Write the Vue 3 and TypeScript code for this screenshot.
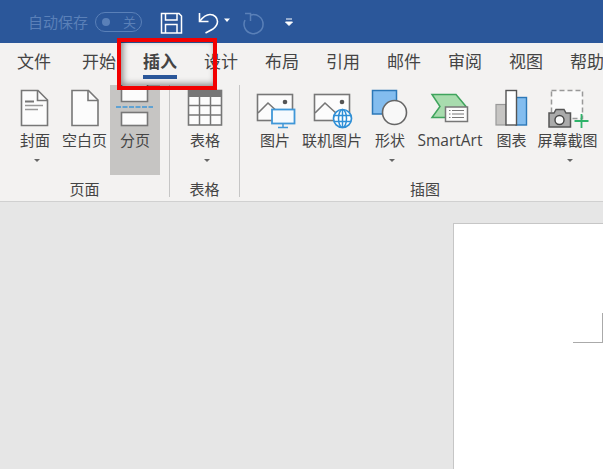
<script setup lang="ts">
const tabs: string[] = ['文件', '开始', '插入', '设计', '布局', '引用', '邮件', '审阅', '视图', '帮助']
</script>

<template>
  <div class="app">
    <header class="titlebar">
      <span class="autosave">自动保存</span>
      <span class="toggle"><i class="toggle-dot"></i><span class="toggle-text">关</span></span>
      <svg class="qat" width="290" height="43" viewBox="150 0 290 43" fill="none">
        <path d="M161.500 13.500h17.500l2.500 2.500v17h-20z" stroke="#fff" stroke-width="1.500" />
        <path d="M165.500 13.500v6.500h11.500v-6.500M165.500 33v-8.500h11.500v8.500" stroke="#fff" stroke-width="1.500" />
        <path d="M199.500 13v8.500h9" stroke="#fff" stroke-width="1.600" />
        <path d="M200 21c3-4 7-6.500 10-6.500 4.500 0 7.500 3.500 7.500 7 0 3.500-2 5.500-4.500 7.500l-7.500 4" stroke="#fff" stroke-width="1.600" />
        <path d="M224 18.500h6l-3 3.500z" fill="#fff" />
        <path d="M251 15a9.500 9.500 0 1 1-6 5M245 13.500h5.500v7.500" stroke="#5a80b8" stroke-width="1.500" />
        <path d="M286 19h6M285.500 22h7l-3.500 3.500z" stroke="#fff" stroke-width="1" fill="#fff" />
      </svg>
    </header>

    <nav class="tabs">
      <span v-for="t in tabs" :key="t" class="tab" :class="{ active: t === '插入' }">{{ t }}</span>
    </nav>

    <section class="ribbon">
      <div class="group g-page">
        <div class="buttons">
          <div class="btn w48">
            <svg class="icon" viewBox="15 88 40 40">
              <path d="M21.500 90.500h16.500l9.500 9.500v25.500h-26z" fill="#fcfcfc" stroke="#777" stroke-width="1.600" />
              <path d="M37.500 90.500v10h10" fill="none" stroke="#777" stroke-width="1.600" />
              <path d="M25 101.500h9" stroke="#777" stroke-width="2" />
              <path d="M25 105.500h18M25 109.500h13" stroke="#999" stroke-width="1.500" />
            </svg>
            <span class="label">封面</span><i class="caret"></i>
          </div>
          <div class="btn w51">
            <svg class="icon" viewBox="64.500 88 40 40">
              <path d="M71.500 90.500h16.500l9.500 9.500v25.500h-26z" fill="#fcfcfc" stroke="#777" stroke-width="1.600" />
              <path d="M87.500 90.500v10h10" fill="none" stroke="#777" stroke-width="1.600" />
            </svg>
            <span class="label">空白页</span>
          </div>
          <div class="btn w50 pressed">
            <svg class="icon" viewBox="115 88 40 40">
              <path d="M121.500 85v16.500h26V85" fill="#fcfcfc" stroke="#777" stroke-width="1.600" />
              <path d="M116 107h37" stroke="#3f97d8" stroke-width="1.300" stroke-dasharray="5 1.500" />
              <rect x="121.500" y="112.500" width="26" height="13" fill="#fcfcfc" stroke="#777" stroke-width="1.600" />
            </svg>
            <span class="label">分页</span>
          </div>
        </div>
        <span class="group-name">页面</span>
      </div>

      <div class="group g-table">
        <div class="buttons">
          <div class="btn w50">
            <svg class="icon" viewBox="185 88 40 40">
              <rect x="188.500" y="90.500" width="33" height="34.500" fill="#fcfcfc" stroke="#777" stroke-width="1.600" />
              <rect x="188" y="90" width="34" height="7" fill="#777" />
              <path d="M199.500 97v28M210.500 97v28M188 105.500h34M188 115h34" stroke="#777" stroke-width="1.500" />
            </svg>
            <span class="label">表格</span><i class="caret"></i>
          </div>
        </div>
        <span class="group-name">表格</span>
      </div>

      <div class="group g-illus">
        <div class="buttons">
          <div class="btn w50">
            <svg class="icon" viewBox="255 88 40 40">
              <rect x="257.500" y="94.500" width="35" height="26" fill="#fcfcfc" stroke="#777" stroke-width="1.600" />
              <path d="M258 113l10-10 12 11" fill="none" stroke="#777" stroke-width="1.600" />
              <circle cx="285" cy="102" r="2.300" fill="#555" />
              <rect x="272" y="109.500" width="22.500" height="14" fill="#f5fafe" stroke="#3f97d8" stroke-width="1.800" />
              <path d="M283 124v3M278 127.500h10" stroke="#3f97d8" stroke-width="1.500" />
            </svg>
            <span class="label">图片</span>
          </div>
          <div class="btn w64">
            <svg class="icon" viewBox="312 88 40 40">
              <rect x="314.500" y="94.500" width="35" height="26" fill="#fcfcfc" stroke="#777" stroke-width="1.600" />
              <path d="M315 113l10-10 12 11" fill="none" stroke="#777" stroke-width="1.600" />
              <circle cx="342" cy="102" r="2.300" fill="#555" />
              <circle cx="342.500" cy="118.500" r="9" fill="#fff" stroke="#2f8fd6" stroke-width="1.700" />
              <ellipse cx="342.500" cy="118.500" rx="4" ry="9" fill="none" stroke="#2f8fd6" stroke-width="1.500" />
              <path d="M342.500 110v17M334 115.500h17M334 121.500h17" stroke="#2f8fd6" stroke-width="1.500" />
            </svg>
            <span class="label">联机图片</span>
          </div>
          <div class="btn w52">
            <svg class="icon" viewBox="370 88 40 40">
              <rect x="372.500" y="90.500" width="24" height="23.500" fill="#83bdef" stroke="#2c78b8" stroke-width="1.500" />
              <circle cx="394.500" cy="112.500" r="12" fill="#f8f8f8" stroke="#666" stroke-width="1.600" />
            </svg>
            <span class="label">形状</span><i class="caret"></i>
          </div>
          <div class="btn w68">
            <svg class="icon" viewBox="430 88 40 40">
              <path d="M432 94.500h24l10 12-10 11h-24l8-11z" fill="#a8dcae" stroke="#3fa45d" stroke-width="1.500" />
              <rect x="445.500" y="107" width="22" height="14.500" fill="#fcfcfc" stroke="#777" stroke-width="1.500" />
              <path d="M449 110.500h1.500M452 110.500h12M449 114h1.500M452 114h12M449 117.500h1.500M452 117.500h12" stroke="#777" stroke-width="1" />
            </svg>
            <span class="label sa">SmartArt</span>
          </div>
          <div class="btn w55">
            <svg class="icon" viewBox="491.500 88 40 40">
              <rect x="495.500" y="104.500" width="10" height="20.500" fill="#c6c5c3" stroke="#999" stroke-width="1.200" />
              <rect x="515.500" y="97.500" width="10.500" height="27.500" fill="#83bdef" stroke="#2c78b8" stroke-width="1.400" />
              <rect x="505.500" y="90.500" width="10.500" height="34.500" fill="#fff" stroke="#555" stroke-width="1.400" />
            </svg>
            <span class="label">图表</span>
          </div>
          <div class="btn w57">
            <svg class="icon" viewBox="547.500 88 40 40">
              <rect x="551" y="90.500" width="31" height="28" fill="#fbfbfb" stroke="#999" stroke-width="1.500" stroke-dasharray="5 3" />
              <path d="M548.500 113h5l2-3.500h8l2 3.500h4.500v14h-21.500z" fill="#aaa" stroke="#555" stroke-width="1.500" />
              <circle cx="559" cy="120" r="4.500" fill="#fbfbfb" stroke="#444" stroke-width="1.400" />
              <path d="M581 114v14M574 121h14" stroke="#2fb36a" stroke-width="1.800" />
            </svg>
            <span class="label">屏幕截图</span><i class="caret"></i>
          </div>
        </div>
        <span class="group-name">插图</span>
      </div>
    </section>

    <main class="canvas">
      <div class="page"><div class="corner"></div></div>
    </main>

    <div class="highlight"></div>
  </div>
</template>

<style>
html, body { margin: 0; overflow: hidden; }
</style>

<style scoped>
.app {
  position: relative;
  width: 603px;
  height: 469px;
  overflow: hidden;
  display: flex;
  flex-direction: column;
  background: #e6e6e6;
  font-family: "Noto Sans CJK SC", "Noto Sans", sans-serif;
  color: #444;
}
.titlebar {
  flex: none;
  height: 43px;
  background: #2b579a;
  display: flex;
  align-items: center;
  padding-left: 28px;
  box-sizing: border-box;
}
.autosave { font-size: 15px; color: #5a80b8; width: 60px; white-space: nowrap; }
.toggle {
  margin-left: 7px;
  width: 47px;
  height: 20px;
  box-sizing: border-box;
  border: 1px solid #5a80b8;
  border-radius: 10px;
  display: flex;
  align-items: center;
  color: #5a80b8;
  padding-left: 6px;
}
.toggle-dot { width: 8px; height: 8px; border-radius: 50%; background: #5a80b8; }
.toggle-text { font-size: 13px; margin-left: 13px; line-height: 1; }
.qat { flex: none; margin-left: 8px; }
.tabs {
  flex: none;
  height: 42px;
  background: #f3f2f1;
  display: flex;
  padding-left: 17px;
  gap: 27px;
  white-space: nowrap;
}
.tab {
  flex: none;
  width: 34px;
  height: 32px;
  font-size: 17px;
  line-height: 35px;
  text-align: center;
}
.tab:first-child { margin-right: 4px; }
.tab.active {
  font-weight: 700;
  border-bottom: 4px solid #2b579a;
}
.ribbon {
  flex: none;
  height: 117px;
  box-sizing: border-box;
  background: #f3f2f1;
  border-bottom: 1px solid #d0d0d0;
  display: flex;
}
.group {
  flex: none;
  box-sizing: border-box;
  height: 112px;
  display: flex;
  flex-direction: column;
  border-right: 1px solid #c6c6c6;
}
.g-page { width: 170px; padding-left: 11px; }
.g-table { width: 70px; padding-left: 10px; }
.g-illus { width: 370px; padding-left: 10px; border-right: none; }
.buttons { flex: none; height: 90px; display: flex; }
.group-name {
  font-size: 15px;
  line-height: 18px;
  margin-top: 5px;
  text-align: center;
  margin-left: -10px;
}
.g-page .group-name { margin-left: -11px; }
.btn {
  flex: none;
  height: 90px;
  display: flex;
  flex-direction: column;
  align-items: center;
}
.w48 { width: 48px; }
.w50 { width: 50px; }
.w51 { width: 51px; }
.w52 { width: 52px; }
.w55 { width: 55px; }
.w57 { width: 57px; }
.w64 { width: 64px; }
.w68 { width: 68px; }
.pressed { background: #c6c5c3; }
.icon { flex: none; width: 40px; height: 40px; margin-top: 3px; overflow: visible; }
.label {
  flex: none;
  font-size: 15px;
  line-height: 20px;
  margin-top: 2px;
  white-space: nowrap;
}
.label.sa { font-family: "Open Sans", "Noto Sans", sans-serif; font-size: 15.500px; }
.caret {
  flex: none;
  width: 0;
  height: 0;
  margin-top: 9px;
  margin-left: 4px;
  border-left: 3.500px solid transparent;
  border-right: 3.500px solid transparent;
  border-top: 3.500px solid #666;
}
.canvas {
  flex: 1;
  min-height: 0;
  padding: 21px 0 0 453px;
  box-sizing: border-box;
}
.page {
  width: 200px;
  height: 300px;
  box-sizing: border-box;
  background: #fff;
  border: 1px solid #c6c6c6;
  padding: 89px 0 0 119px;
}
.corner {
  width: 30px;
  height: 30px;
  box-sizing: border-box;
  border-right: 1px solid #aaa;
  border-bottom: 1px solid #aaa;
}
.highlight {
  position: absolute;
  left: 117px;
  top: 38px;
  width: 100px;
  height: 52px;
  box-sizing: border-box;
  border: 4px solid #f20000;
  box-shadow: inset 2px -2px 6px rgba(0, 0, 0, 0.45);
}
</style>
